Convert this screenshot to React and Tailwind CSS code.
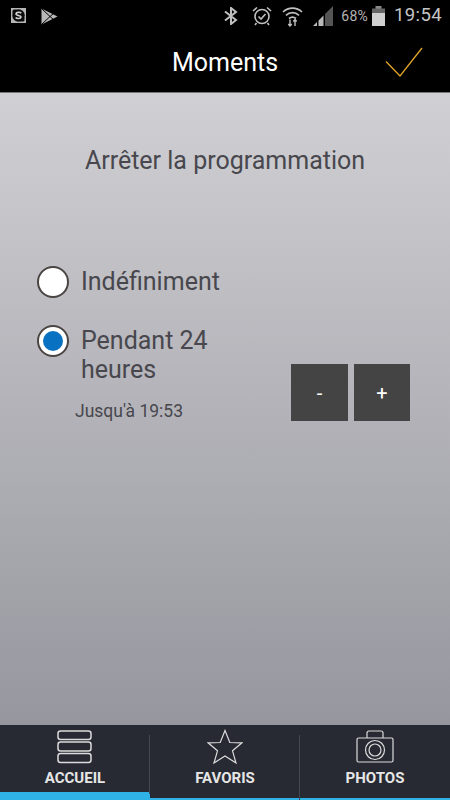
import React from "react";

const StatusBar = () => (
  <div className="h-[32px] flex items-center bg-black pl-[11px] pr-[8px] text-[#c4c4c4]">
    {/* Skype-ish notification */}
    <svg width="15" height="15" viewBox="0 0 15 15" className="mt-[-1px]">
      <rect width="15" height="15" fill="#b5b5b5" />
      <circle cx="7.5" cy="7.5" r="6.2" fill="#0c0c0c" />
      <rect x="1.5" y="1.5" width="5" height="5" rx="1.5" fill="#0c0c0c" />
      <rect x="8.5" y="8.5" width="5" height="5" rx="1.5" fill="#0c0c0c" />
      <path d="M10.2 5.2C9.4 4 5.2 3.9 5 5.8c-.2 2 5.2 1.4 5 3.4-.2 1.8-4.4 1.7-5.3.3" fill="none" stroke="#d0d0d0" strokeWidth="1.6" />
    </svg>
    {/* Play store */}
    <svg width="17" height="17" viewBox="0 0 17 17" className="ml-[15px]">
      <path d="M0.5 0.5 16.5 8.5 0.5 16.5Z" fill="#b8b8b8" />
      <path d="M0.5 0.5 9 8.500 0.5 16.5M9 8.500 12.500 5.500M9 8.500 12.500 11.500" fill="none" stroke="#000" strokeWidth="1" />
    </svg>
    <div className="flex-1" />
    {/* Bluetooth */}
    <svg width="14" height="18" viewBox="0 0 14 18" fill="none" stroke="#c0c0c0" strokeWidth="2">
      <path d="M1 4.500 12 13 7 17V1L12 5 1 13.500" />
    </svg>
    {/* Alarm */}
    <svg width="20" height="20" viewBox="0 0 20 20" fill="none" stroke="#c0c0c0" strokeWidth="1.6" className="ml-[14px]">
      <circle cx="10" cy="10.500" r="7" />
      <path d="M6.500 10.500 9 13 13.500 8" />
      <path d="M1 5 5 1.500M19 5 15 1.500M4.500 17l-1.500 2M15.500 17l1.500 2" />
    </svg>
    {/* Wifi */}
    <svg width="21" height="21" viewBox="0 0 21 21" fill="none" stroke="#c0c0c0" strokeWidth="1.7" className="ml-[10px]">
      <path d="M1 6C6.500 .8 14.500 .8 20 6M4 9.300C7.800 5.800 13.200 5.800 17 9.300M7 12.500C9 10.800 12 10.800 14 12.500" />
      <path d="M8 13.500V20M6.300 18 8 20 9.700 18M13 20V13.500M11.300 15.500 13 13.500 14.700 15.500" strokeWidth="1.400" />
    </svg>
    {/* Signal */}
    <svg width="20" height="20" viewBox="0 0 20 20" className="ml-[10px]">
      <path d="M20 0V20H12V8Z" fill="#555" />
      <path d="M0 20 4 16V20ZM5.500 20V14.500L10.500 9.500V20Z" fill="#bbb" />
    </svg>
    <span className="ml-[8px] text-[14px] tracking-[0.2px] text-[#b4b4b4]">68%</span>
    {/* Battery */}
    <svg width="13" height="20" viewBox="0 0 13 20" className="ml-[4px]">
      <rect x="3.500" y="0" width="6" height="3" fill="#888" />
      <rect x="0" y="2.500" width="13" height="5" fill="#666" />
      <rect x="0" y="7" width="13" height="13" fill="#d0d0d0" />
    </svg>
    <span className="ml-[9px] text-[18.5px] tracking-[0.4px] text-[#c4c4c4]">19:54</span>
  </div>
);

const Header = () => (
  <div className="h-[61px] flex items-center justify-center relative bg-black border-b border-[#777] text-white">
    <span className="text-[25px] mt-[2px]">Moments</span>
    <svg width="38" height="31" viewBox="0 0 38 31" fill="none" stroke="#e0a526" strokeWidth="1.300" className="absolute right-[27px] top-[15px]">
      <path d="M1 14.500 15 29 37 1" />
    </svg>
  </div>
);

const Radio = ({ checked }) => (
  <div className="w-[32px] h-[32px] shrink-0 rounded-full bg-white border-2 border-[#4a4542] flex items-center justify-center">
    {checked && <div className="w-[20px] h-[20px] rounded-full bg-[#0971c2]" />}
  </div>
);

const TabItem = ({ label, active, last, children }) => (
  <div className={`relative flex-1 flex flex-col items-center pt-[3px] border-b-2 border-[#2fb3e6] ${active ? "border-b-[8px]" : ""}`}>
    <div className="h-[37px] flex items-center justify-center">{children}</div>
    <span className="mt-[3px] text-[15px] leading-[20px] font-bold text-[#e6e6e6]">{label}</span>
    {!last && <div className="absolute right-0 top-[10px] bottom-[-2px] w-px bg-[#454852]" />}
  </div>
);

export default function App() {
  return (
    <div className="w-[450px] h-[800px] flex flex-col overflow-hidden font-['Roboto',sans-serif]">
      <StatusBar />
      <Header />

      <div className="flex-1 bg-gradient-to-b from-[#d0d0d4] to-[#96969e] text-[#47474d]">
        <p className="pt-[52px] text-center text-[25px] leading-[32px]">Arrêter la programmation</p>

        <div className="mt-[89px] pl-[37px] flex items-center gap-[12px]">
          <Radio />
          <span className="text-[25px] leading-[32px]">Indéfiniment</span>
        </div>

        <div className="flex mt-[27px]">
          <div className="w-[291px] pl-[37px]">
            <div className="flex items-start gap-[12px]">
              <Radio checked />
              <span className="text-[25px] leading-[29px] w-[150px] mt-[1px]">Pendant 24 heures</span>
            </div>
            <p className="ml-[38px] mt-[15px] text-[17.5px] leading-[24px]">Jusqu'à 19:53</p>
          </div>
          <div className="flex gap-[6px] mt-[39px]">
            <button className="w-[57px] h-[57px] bg-[#444] text-white text-[20px]">-</button>
            <button className="w-[56px] h-[57px] bg-[#444] text-white text-[20px]">+</button>
          </div>
        </div>
      </div>

      <div className="h-[75px] flex bg-[#272a33]">
        <TabItem label="ACCUEIL" active>
          <svg width="36" height="34" viewBox="0 0 36 34" fill="none" stroke="#dcdcdc" strokeWidth="1.500">
            <rect x="1" y="1" width="33" height="8.500" rx="2.500" />
            <rect x="1" y="12" width="33" height="9" rx="2.500" />
            <rect x="1" y="23.500" width="33" height="9" rx="2.500" />
          </svg>
        </TabItem>
        <TabItem label="FAVORIS">
          <svg width="36" height="36" viewBox="0 0 36 36" fill="none" stroke="#dcdcdc" strokeWidth="1.200">
            <path d="M18 1.500 22.800 13.500 35 13.800 25.500 21.800 29 34 18 27 7 34 10.500 21.800 1 13.800 13.200 13.500Z" />
          </svg>
        </TabItem>
        <TabItem label="PHOTOS" last>
          <svg width="38" height="33" viewBox="0 0 38 33" fill="none" stroke="#dcdcdc" strokeWidth="1.200">
            <rect x="1" y="8" width="36" height="24" rx="1.500" />
            <path d="M11 8V3a2 2 0 0 1 2-2h12a2 2 0 0 1 2 2v5" />
            <circle cx="19" cy="20" r="9.500" />
            <circle cx="19" cy="20" r="6" />
          </svg>
        </TabItem>
      </div>
    </div>
  );
}
